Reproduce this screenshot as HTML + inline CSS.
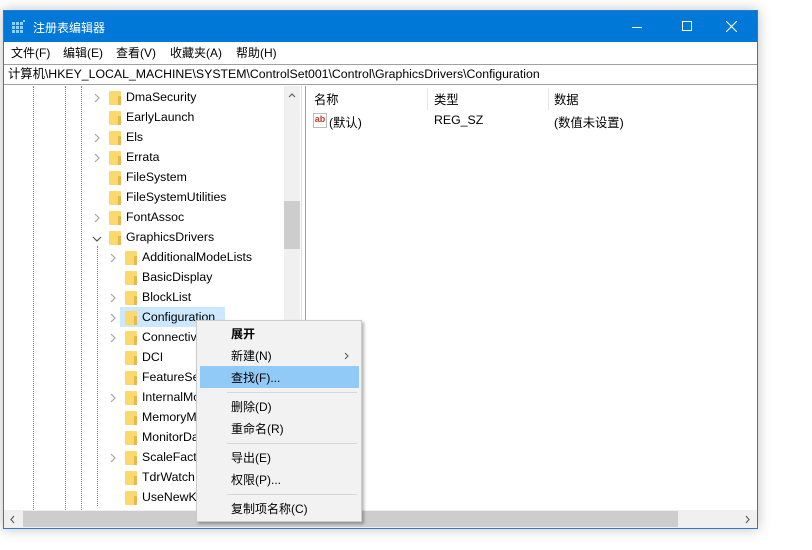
<!DOCTYPE html>
<html><head><meta charset="utf-8"><style>
*{margin:0;padding:0;box-sizing:border-box}
body{width:812px;height:550px;background:#fff;font-family:"Liberation Sans","Noto Sans CJK SC",sans-serif;font-size:12px;color:#000;position:relative;overflow:hidden}
.abs{position:absolute}
.win{left:3px;top:10px;width:755px;height:519px;border:1px solid #2b79d0;background:#fff;box-shadow:0 0 12px rgba(0,0,0,.25)}
.title{left:0;top:0;width:753px;height:31px;background:#0078d7;color:#fff;font-size:12px}
.menu{left:0;top:31px;width:753px;height:22px;background:#fff}
.menu span{position:absolute;top:2px}
.addr{left:0;top:53px;width:753px;height:21px;border:1px solid #a0a0a0;border-left:0;border-right:0;padding:0 4px;line-height:18px;white-space:nowrap;font-size:12.3px}
.t{position:absolute;white-space:nowrap;font-size:12.3px}
.dv{position:absolute;width:0;border-left:1px dotted #888}
.fold{position:absolute;width:12px;height:14px;background:#fcd96e;border-radius:1px}
.fold:after{content:"";position:absolute;right:0;bottom:0;width:3px;height:9px;background:#e7b94a}
.chev{position:absolute;width:8px;height:10px}
.cm{left:196px;top:320px;width:166px;height:202px;background:#f2f2f2;border:1px solid #ccc;box-shadow:2px 2px 3px rgba(0,0,0,.3)}
.cm .i{position:absolute;left:34px;font-size:12px}
.sep{position:absolute;left:30px;width:130px;height:1px;background:#d7d7d7}
</style></head><body>
<svg width="0" height="0" style="position:absolute"><defs>
<symbol id="cr" viewBox="0 0 8 10"><path d="M2 1L6 5L2 9" fill="none" stroke="#a6a6a6" stroke-width="1.2"/></symbol>
<symbol id="cd" viewBox="0 0 10 8"><path d="M1 2L5 6L9 2" fill="none" stroke="#555" stroke-width="1.2"/></symbol>
</defs></svg>
<div class="abs win">
 <div class="abs title">
  <svg class="abs" style="left:8px;top:9px" width="14" height="14"><g fill="#8fd0f5"><rect x="0" y="2" width="3" height="3"/><rect x="4" y="2" width="3" height="3"/><rect x="8" y="2" width="3" height="3"/><rect x="0" y="6" width="3" height="3"/><rect x="4" y="6" width="3" height="3"/><rect x="8" y="6" width="3" height="3"/><rect x="0" y="10" width="3" height="3"/><rect x="4" y="10" width="3" height="3"/><rect x="8" y="10" width="3" height="3"/><rect x="11" y="0" width="2" height="2"/></g></svg>
  <span class="abs" style="left:29px;top:8px">注册表编辑器</span>
  <div class="abs" style="left:628px;top:16px;width:10px;height:1px;background:#fff"></div>
  <div class="abs" style="left:678px;top:10px;width:10px;height:10px;border:1px solid #fff"></div>
  <svg class="abs" style="left:722px;top:10px" width="11" height="11"><path d="M0 0L11 11M11 0L0 11" stroke="#fff" stroke-width="1.1"/></svg>
 </div>
 <div class="abs menu">
  <span style="left:7px">文件(F)</span><span style="left:59px">编辑(E)</span><span style="left:112px">查看(V)</span><span style="left:166px">收藏夹(A)</span><span style="left:232px">帮助(H)</span>
 </div>
 <div class="abs addr">计算机\HKEY_LOCAL_MACHINE\SYSTEM\ControlSet001\Control\GraphicsDrivers\Configuration</div>
 <div class="abs" style="left:0;top:75px;width:296px;height:424px;overflow:hidden">
  <div class="dv" style="left:29px;top:0;height:424px"></div>
  <div class="dv" style="left:61px;top:0;height:424px"></div>
  <div class="dv" style="left:77px;top:0;height:424px"></div>
  <div class="dv" style="left:93px;top:160px;height:260px"></div>
  <svg class="chev" style="left:89px;top:7px"><use href="#cr"/></svg><div class="fold" style="left:105px;top:5px"></div><span class="t" style="left:122px;top:4px">DmaSecurity</span>
  <div class="fold" style="left:105px;top:25px"></div><span class="t" style="left:122px;top:24px">EarlyLaunch</span>
  <svg class="chev" style="left:89px;top:47px"><use href="#cr"/></svg><div class="fold" style="left:105px;top:45px"></div><span class="t" style="left:122px;top:44px">Els</span>
  <svg class="chev" style="left:89px;top:67px"><use href="#cr"/></svg><div class="fold" style="left:105px;top:65px"></div><span class="t" style="left:122px;top:64px">Errata</span>
  <div class="fold" style="left:105px;top:85px"></div><span class="t" style="left:122px;top:84px">FileSystem</span>
  <div class="fold" style="left:105px;top:105px"></div><span class="t" style="left:122px;top:104px">FileSystemUtilities</span>
  <svg class="chev" style="left:89px;top:127px"><use href="#cr"/></svg><div class="fold" style="left:105px;top:125px"></div><span class="t" style="left:122px;top:124px">FontAssoc</span>
  <svg class="abs" style="left:88px;top:149px" width="10" height="8"><use href="#cd"/></svg><div class="fold" style="left:105px;top:145px"></div><span class="t" style="left:122px;top:144px">GraphicsDrivers</span>
  <div class="abs" style="left:116px;top:221px;width:105px;height:20px;background:#cce8ff"></div>
  <svg class="chev" style="left:105px;top:167px"><use href="#cr"/></svg><div class="fold" style="left:121px;top:165px"></div><span class="t" style="left:138px;top:164px">AdditionalModeLists</span>
  <div class="fold" style="left:121px;top:185px"></div><span class="t" style="left:138px;top:184px">BasicDisplay</span>
  <svg class="chev" style="left:105px;top:207px"><use href="#cr"/></svg><div class="fold" style="left:121px;top:205px"></div><span class="t" style="left:138px;top:204px">BlockList</span>
  <svg class="chev" style="left:105px;top:227px"><use href="#cr"/></svg><div class="fold" style="left:121px;top:225px"></div><span class="t" style="left:138px;top:224px">Configuration</span>
  <svg class="chev" style="left:105px;top:247px"><use href="#cr"/></svg><div class="fold" style="left:121px;top:245px"></div><span class="t" style="left:138px;top:244px">Connectivity</span>
  <div class="fold" style="left:121px;top:265px"></div><span class="t" style="left:138px;top:264px">DCI</span>
  <div class="fold" style="left:121px;top:285px"></div><span class="t" style="left:138px;top:284px">FeatureSetUsage</span>
  <svg class="chev" style="left:105px;top:307px"><use href="#cr"/></svg><div class="fold" style="left:121px;top:305px"></div><span class="t" style="left:138px;top:304px">InternalMonitor</span>
  <div class="fold" style="left:121px;top:325px"></div><span class="t" style="left:138px;top:324px">MemoryManager</span>
  <div class="fold" style="left:121px;top:345px"></div><span class="t" style="left:138px;top:344px">MonitorDataStore</span>
  <svg class="chev" style="left:105px;top:367px"><use href="#cr"/></svg><div class="fold" style="left:121px;top:365px"></div><span class="t" style="left:138px;top:364px">ScaleFactors</span>
  <div class="fold" style="left:121px;top:385px"></div><span class="t" style="left:138px;top:384px">TdrWatch</span>
  <div class="fold" style="left:121px;top:405px"></div><span class="t" style="left:138px;top:404px">UseNewKey</span>
  <div class="abs" style="left:280px;top:0;width:16px;height:424px;background:#f0f0f0"></div>
  <div class="abs" style="left:280px;top:115px;width:16px;height:48px;background:#cdcdcd"></div>
  <svg class="abs" style="left:284px;top:6px" width="8" height="6"><path d="M1 5L4 2L7 5" fill="none" stroke="#606060" stroke-width="1.2"/></svg>
 </div>
 <div class="abs" style="left:297px;top:75px;width:1px;height:424px;background:#e0e0e0"></div>
 <div class="abs" style="left:301px;top:75px;width:1px;height:424px;background:#a0a0a0"></div>
 <div class="abs" style="left:302px;top:75px;width:451px;height:424px">
  <span class="t" style="left:8px;top:4px">名称</span>
  <div class="abs" style="left:121px;top:2px;width:1px;height:22px;background:#e5e5e5"></div>
  <span class="t" style="left:128px;top:4px">类型</span>
  <div class="abs" style="left:242px;top:2px;width:1px;height:22px;background:#e5e5e5"></div>
  <span class="t" style="left:248px;top:4px">数据</span>
  <div class="abs" style="left:7px;top:27px;width:14px;height:15px;border:1px solid #bbb;background:#fff;font-size:9px;color:#c0392b;font-weight:bold;line-height:10px;text-align:center">ab</div>
  <span class="t" style="left:23px;top:27px">(默认)</span>
  <span class="t" style="left:128px;top:27px">REG_SZ</span>
  <span class="t" style="left:248px;top:27px">(数值未设置)</span>
 </div>
 <div class="abs" style="left:0;top:499px;width:753px;height:18px;background:#f0f0f0"></div>
 <div class="abs" style="left:19px;top:500px;width:655px;height:16px;background:#cdcdcd"></div>
 <svg class="abs" style="left:5px;top:504px" width="6" height="9"><path d="M5 1L2 4.5L5 8" fill="none" stroke="#606060" stroke-width="1.2"/></svg>
 <svg class="abs" style="left:741px;top:504px" width="6" height="9"><path d="M1 1L4 4.5L1 8" fill="none" stroke="#606060" stroke-width="1.2"/></svg>
</div>
<div class="abs cm">
 <span class="i" style="top:4px;font-weight:bold">展开</span>
 <span class="i" style="top:26px">新建(N)</span><svg class="abs" style="left:147px;top:31px" width="5" height="8"><path d="M1 1L4 4L1 7" fill="none" stroke="#555" stroke-width="1"/></svg>
 <div class="abs" style="left:3px;top:45px;width:159px;height:22px;background:#91c9f7"></div>
 <span class="i" style="top:48px">查找(F)...</span>
 <div class="sep" style="top:71px"></div>
 <span class="i" style="top:77px">删除(D)</span>
 <span class="i" style="top:99px">重命名(R)</span>
 <div class="sep" style="top:122px"></div>
 <span class="i" style="top:128px">导出(E)</span>
 <span class="i" style="top:150px">权限(P)...</span>
 <div class="sep" style="top:173px"></div>
 <span class="i" style="top:179px">复制项名称(C)</span>
</div>
</body></html>
